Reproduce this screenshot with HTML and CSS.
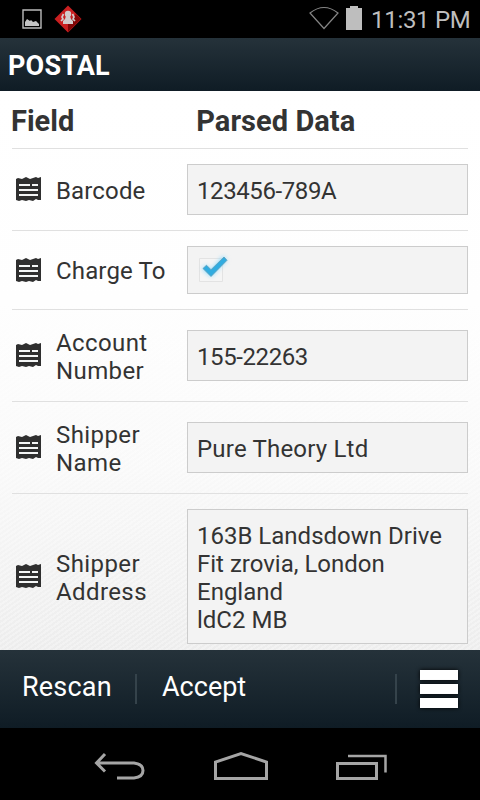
FILE: index.html
```html
<!DOCTYPE html>
<html lang="en">
<head>
<meta charset="utf-8">
<title>Postal</title>
<link rel="stylesheet" href="styles.css">
</head>
<body>
<svg class="defs" aria-hidden="true">
  <symbol id="receipt" viewBox="0 0 25 25">
    <path fill="#2f2f2f" d="M0 2l2-1 4 1 4-2 4 2 3-1 3-1 2 1 3-1v23h-3l-2-1-3 2-4-1-3 1-4-1-3 1-3-1H0z"/>
    <path fill="#f4f6f6" d="M3 7h11v2H3zM16 7h6v2h-6zM3 12h19v2H3zM3 17h19v2H3z"/>
  </symbol>
</svg>
<div class="status">
  <svg class="picture" width="20" height="20" viewBox="0 0 20 20"><path fill="none" stroke="#bbb" stroke-width="1.4" d="M1 1h18v18H1z"/><path fill="#c4c4c4" d="M3 17v-4l2-3 3 2 1-1 2 2 3-1 3 3v2z"/></svg>
  <svg class="alert" width="28" height="28" viewBox="0 0 28 28">
    <path fill="#c91f20" d="M14 .5L27.500 14 14 27.500.5 14z"/><path fill="#810606" d="M27 14L14 27V18L22 9z"/>
    <g fill="#d2caca"><circle cx="14" cy="9" r="3.200"/><path d="M12 11h4l1 3 2 2v3H9v-3l2-2z"/></g>
    <path fill="none" stroke="#d2caca" stroke-width="1.700" d="M9.500 9L8 12l1 2-2 2M18.500 9l1.500 3-1 2 2 2"/>
  </svg>
  <svg class="wifi" width="30" height="24" viewBox="0 0 30 24"><path fill="none" stroke="#858585" stroke-width="1.200" d="M1 7Q15-4 29 7L15 22.500z"/></svg>
  <svg class="battery" width="16" height="24" viewBox="0 0 16 24"><path fill="#bebebe" d="M0 2h4V0h8v2h4v22H0z"/></svg>
  <span class="clock">11:31 PM</span>
</div>
<header class="title">POSTAL</header>
<main class="content">
  <div class="row head"><span>Field</span><span class="parsed">Parsed Data</span></div>
  <div class="row"><svg class="icon"><use href="#receipt"/></svg><span class="label">Barcode</span><div class="field number">123456-789A</div></div>
  <div class="row charge"><svg class="icon"><use href="#receipt"/></svg><span class="label">Charge To</span>
    <div class="field check">
      <svg width="40" height="38" viewBox="0 0 40 38">
        <path fill="#f5f5f5" stroke="#e3e3e3" d="M5.500 8.500h23v23h-23z"/>
        <path class="glow" d="M8 19l4-4 5 5L29 6l4 4-16 17z"/>
        <path fill="#31ace0" stroke="#5c9db8" stroke-width=".8" d="M9 18.500l3.500-3.300 4.500 4.500L30 7l3 3.300L17 26.500z"/>
      </svg>
    </div>
  </div>
  <div class="row tall"><svg class="icon"><use href="#receipt"/></svg><span class="label wide">Account Number</span><div class="field number">155-22263</div></div>
  <div class="row tall"><svg class="icon"><use href="#receipt"/></svg><span class="label wide">Shipper Name</span><div class="field name">Pure Theory Ltd</div></div>
  <div class="row address"><svg class="icon"><use href="#receipt"/></svg><span class="label wide">Shipper Address</span><div class="field">163B Landsdown Drive<br>Fit zrovia, London<br>England<br>ldC2 MB</div></div>
</main>
<footer class="toolbar">
  <span class="rescan">Rescan</span><i class="sep"></i><span class="accept">Accept</span><i class="sep last"></i>
  <div class="menu"><b></b><b></b><b></b></div>
</footer>
<nav class="navbar">
  <svg width="52" height="30" viewBox="0 0 52 30"><path fill="none" stroke="#a5a5a5" stroke-width="3" d="M11 2L2.500 11 11 19.500M3 11h37q9 1 9 7.500t-9 7.500H23"/></svg>
  <svg width="56" height="30" viewBox="0 0 56 30"><path fill="none" stroke="#a5a5a5" stroke-width="3" d="M2.500 26.500V10L28 1.600 53.500 10v16.500z"/></svg>
  <svg width="52" height="30" viewBox="0 0 52 30"><path fill="none" stroke="#a5a5a5" stroke-width="3" d="M1.500 11.500h39v15h-39z"/><path fill="none" stroke="#a5a5a5" stroke-width="2.500" d="M12 4h37.500v16.500"/></svg>
</nav>
</body>
</html>
```

FILE: styles.css
```css
* { box-sizing: border-box; }
body { margin: 0; width: 480px; height: 800px; overflow: hidden; background: #000; font: 24px/28px Roboto, sans-serif; color: #333; display: flex; flex-direction: column; }
svg { display: block; flex: none; }
.defs { position: absolute; width: 0; height: 0; }
.status { height: 38px; display: flex; align-items: center; padding-left: 22px; }
.alert { margin-left: 12px; }
.wifi { margin-left: 227px; margin-top: -2px; }
.battery { margin-left: 7px; margin-top: -2px; }
.clock { margin: 2px 0 0 9px; color: #bebebe; font-size: 24px; letter-spacing: -.3px; white-space: nowrap; }
.title { height: 53px; padding: 14px 8px 0; background: linear-gradient(#25323a, #0f1c25); color: #fff; font-size: 27px; letter-spacing: .2px; font-weight: 700; }
.content { height: 559px; padding: 0 12px; overflow: hidden; background: repeating-linear-gradient(145deg, rgba(255,255,255,.3) 0 2px, rgba(255,255,255,0) 2px 4px), linear-gradient(#fff 0, #fefefe 38%, #f9f9f9 68%, #ededed 100%); }
.row { display: flex; align-items: center; border-bottom: 1px solid #e0e0e0; height: 82px; padding-left: 4px; }
.head { height: 58px; padding: 2px 0 0; font-size: 29px; font-weight: 700; }
.head span:first-child { margin-left: -1px; }
.parsed { margin-left: 122px; letter-spacing: .05px; }
.charge { height: 79px; }
.tall { height: 92px; }
.address { height: 165px; border: 0; }
.icon { width: 25px; height: 25px; }
.label { flex: none; width: 146px; padding: 2px 15px 0; letter-spacing: .15px; white-space: nowrap; }
.wide { white-space: normal; letter-spacing: .4px; }
.field { flex: none; width: 281px; height: 51px; padding: 12px 9px 10px; border: 1px solid #ccc; background: #f3f3f3; white-space: nowrap; }
.number { letter-spacing: -.4px; }
.name { letter-spacing: .2px; }
.check { height: 48px; padding: 3px 6px; }
.address .field { height: 135px; }
.glow { fill: #8fdcff; filter: blur(2px); }
.toolbar { height: 78px; display: flex; align-items: center; padding-left: 22px; background: linear-gradient(#25323a, #0f1c25); color: #fff; font-size: 27px; }
.rescan { width: 113px; margin-top: -4px; letter-spacing: .2px; }
.accept { width: 83px; margin: -4px 0 0 25px; }
.sep { width: 2px; height: 30px; background: #35434b; }
.last { margin-left: 150px; }
.menu { margin-left: 23px; display: grid; gap: 4px; }
.menu b { display: block; width: 38px; height: 10px; background: #fff; box-shadow: 0 0 4px #000; }
.navbar { height: 72px; display: flex; align-items: center; padding: 5px 0 0 94px; gap: 67px; }
```
